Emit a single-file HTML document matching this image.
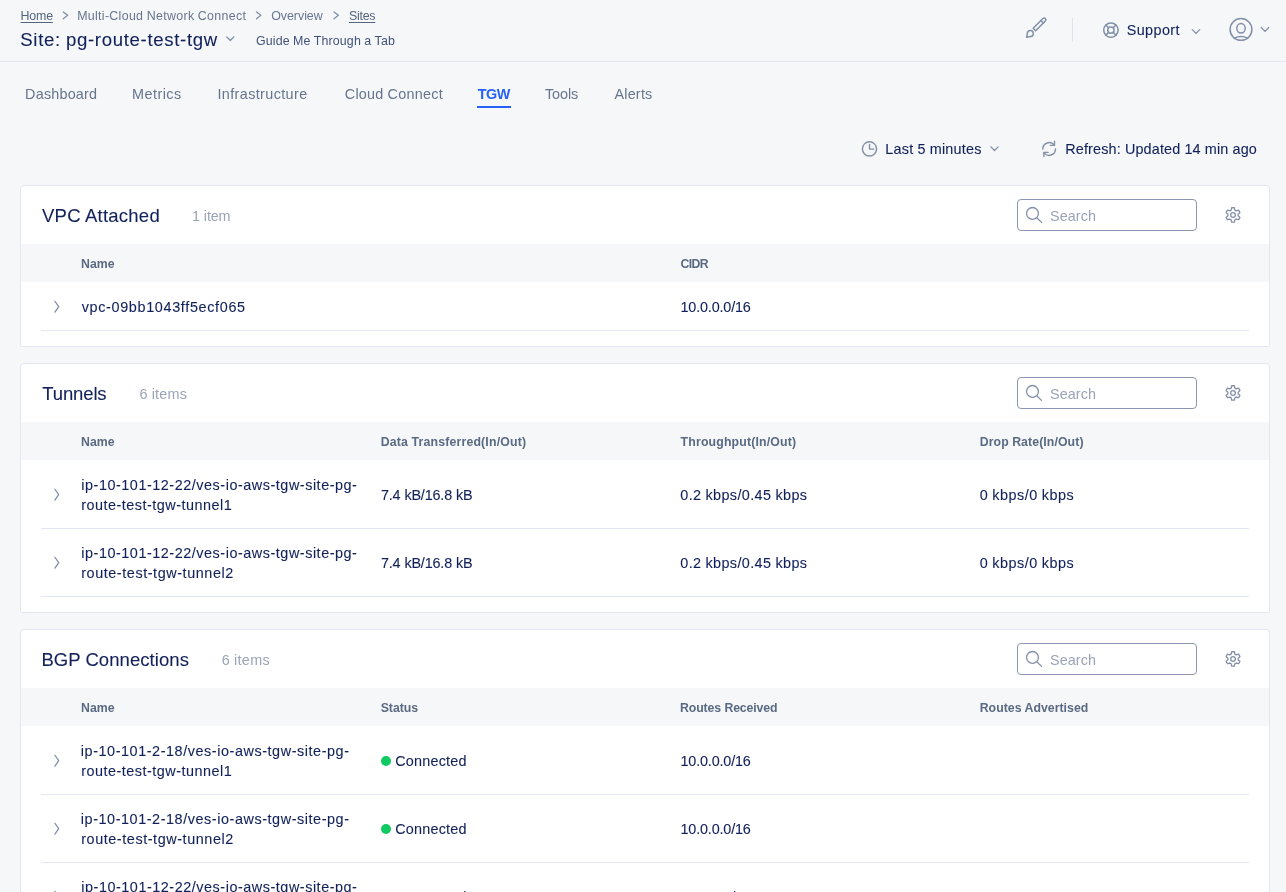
<!DOCTYPE html>
<html lang="en">
<head>
<meta charset="utf-8">
<title>Site: pg-route-test-tgw</title>
<style>
*{box-sizing:border-box;margin:0;padding:0}
html,body{font-variant-ligatures:none;width:1286px;height:892px;overflow:hidden;background:#f5f7f9;font-family:"Liberation Sans",sans-serif;color:#12215a}
.t{position:absolute;white-space:nowrap;line-height:1}
#L{position:absolute;left:0;top:0;width:1286px;height:892px;will-change:transform}
.abs{position:absolute}
h1,h2{font-weight:normal}
a{text-decoration:none}
.bc{font-size:12.4px;color:#67768f}
.bc.u{text-decoration:underline;text-underline-offset:2px;text-decoration-thickness:1px;color:#55657f}
.ttl{font-size:18.6px;color:#12215a;-webkit-text-stroke:0.1px #12215a}
.guide{font-size:12.4px;color:#44537a}
.tab{font-size:14.4px;color:#66758d}
.tab.on{color:#2761fb;font-weight:bold}
.ctl{font-size:14.4px;color:#12215a;-webkit-text-stroke:0.1px #12215a}
.card{position:absolute;left:20px;width:1250px;background:#fff;border:1px solid #e2e6f2;border-radius:4px 4px 1.5px 1.5px}
.band{position:absolute;left:21px;width:1248px;height:38px;background:#f5f7f9}
.ln{position:absolute;left:41px;width:1208px;height:1px;background:#e2e6f2}
.h2{font-size:18.5px;color:#12215a;-webkit-text-stroke:0.1px #12215a}
.cnt{font-size:14.4px;color:#9aa3b8}
.ph{font-size:14.4px;color:#9aa3b8}
.th{font-size:12.3px;font-weight:bold;color:#5b6a83}
.td{font-size:14.4px;color:#12215a;-webkit-text-stroke:0.1px #12215a}
.srch{position:absolute;left:1017px;width:180px;height:32px;border:1px solid #8d96b0;border-radius:4px;background:#fff}
.dot{position:absolute;width:10px;height:10px;border-radius:50%;background:#0fcb62}
svg{position:absolute;overflow:visible}
</style>
</head>
<body>

<div id="L">
<div class="abs" style="left:0;top:61px;width:1286px;height:1px;background:#e3e6f0"></div>
<div class="abs" style="left:477px;top:106px;width:34px;height:2px;background:#2761fb"></div>
<div class="abs" style="left:1072px;top:18px;width:1px;height:24px;background:#dfe3ec"></div>

<div class="card" style="top:185px;height:162px"></div>
<div class="band" style="top:244px"></div>
<div class="ln" style="top:330px"></div>
<div class="srch" style="top:199px"></div>

<div class="card" style="top:363px;height:250px"></div>
<div class="band" style="top:422px"></div>
<div class="ln" style="top:528px"></div>
<div class="ln" style="top:596px"></div>
<div class="srch" style="top:377px"></div>

<div class="card" style="top:629px;height:300px"></div>
<div class="band" style="top:688px"></div>
<div class="ln" style="top:794px"></div>
<div class="ln" style="top:862px"></div>
<div class="srch" style="top:643px"></div>
<div class="dot" style="left:381px;top:756px"></div>
<div class="dot" style="left:381px;top:824px"></div>
<div class="dot" style="left:381px;top:892px"></div>
<svg width="1286" height="892" viewBox="0 0 1286 892" style="left:0;top:0" fill="none" stroke="#8390a8" stroke-width="1.3" stroke-linecap="round" stroke-linejoin="round">
<path d="M63.30 11.90 L67.70 15.35 L63.30 18.80"/>
<path d="M256.50 11.90 L260.90 15.35 L256.50 18.80"/>
<path d="M334.00 11.90 L338.40 15.35 L334.00 18.80"/>
<path d="M226.70 36.90 L230.30 40.50 L233.90 36.90"/>
<g stroke-width="1.5"><g transform="translate(1034.38 29.52) rotate(-45)"><path d="M0 -1.72 H13.78 A1.72 1.72 0 0 1 13.78 1.72 H0 Z"/><path d="M11 -1.72 V1.72"/></g>
<path d="M1026.60 37.20 L1027.35 33.07 A3.00 3.00 0 1 1 1030.75 36.57 Z"/></g>
<g stroke-width="1.5"><circle cx="1110.9" cy="30.1" r="7.2"/><circle cx="1110.9" cy="30.1" r="3.2"/>
<path d="M1113.16 32.36 L1115.99 35.19"/>
<path d="M1108.64 32.36 L1105.81 35.19"/>
<path d="M1108.64 27.84 L1105.81 25.01"/>
<path d="M1113.16 27.84 L1115.99 25.01"/>
</g>
<path d="M1192.30 29.65 L1196.00 33.35 L1199.70 29.65"/>
<g stroke-width="1.5"><circle cx="1241" cy="29.45" r="10.9"/><ellipse cx="1241" cy="28.3" rx="4.2" ry="4.8"/><path d="M1234.4 38.1 Q1241 35.0 1247.6 38.1"/></g>
<path d="M1261.30 27.55 L1265.00 31.35 L1268.70 27.55"/>
<g stroke-width="1.4"><circle cx="869.5" cy="148.9" r="7.1"/><path d="M869.5 144.4 V149.1 H873.9"/></g>
<path d="M990.90 146.90 L994.50 150.50 L998.10 146.90"/>
<g stroke-width="1.4"><path d="M1042.8 149 A6.4 6.4 0 0 1 1054.3 145.2"/><path d="M1054.5 141.3 V145.4 H1050.3"/><path d="M1055.5 149 A6.4 6.4 0 0 1 1044 152.8"/><path d="M1043.9 156.6 V152.4 H1048.1"/></g>
<circle cx="1032.50" cy="213.40" r="5.9"/><path d="M1036.80 217.80 L1041.50 222.40"/>
<path d="M1231.17 210.12 L1231.69 207.74 L1234.37 207.74 L1234.89 210.12 L1236.30 210.93 L1238.62 210.20 L1239.96 212.52 L1238.17 214.16 L1238.17 215.78 L1239.96 217.42 L1238.62 219.74 L1236.30 219.01 L1234.89 219.82 L1234.37 222.20 L1231.69 222.20 L1231.17 219.82 L1229.76 219.01 L1227.44 219.74 L1226.10 217.42 L1227.89 215.78 L1227.89 214.16 L1226.10 212.52 L1227.44 210.20 L1229.76 210.93Z"/><circle cx="1233.03" cy="214.97" r="2.35"/>
<circle cx="1032.50" cy="391.40" r="5.9"/><path d="M1036.80 395.80 L1041.50 400.40"/>
<path d="M1231.17 388.12 L1231.69 385.74 L1234.37 385.74 L1234.89 388.12 L1236.30 388.93 L1238.62 388.20 L1239.96 390.52 L1238.17 392.16 L1238.17 393.78 L1239.96 395.42 L1238.62 397.74 L1236.30 397.01 L1234.89 397.82 L1234.37 400.20 L1231.69 400.20 L1231.17 397.82 L1229.76 397.01 L1227.44 397.74 L1226.10 395.42 L1227.89 393.78 L1227.89 392.16 L1226.10 390.52 L1227.44 388.20 L1229.76 388.93Z"/><circle cx="1233.03" cy="392.97" r="2.35"/>
<circle cx="1032.50" cy="657.40" r="5.9"/><path d="M1036.80 661.80 L1041.50 666.40"/>
<path d="M1231.17 654.12 L1231.69 651.74 L1234.37 651.74 L1234.89 654.12 L1236.30 654.93 L1238.62 654.20 L1239.96 656.52 L1238.17 658.16 L1238.17 659.78 L1239.96 661.42 L1238.62 663.74 L1236.30 663.01 L1234.89 663.82 L1234.37 666.20 L1231.69 666.20 L1231.17 663.82 L1229.76 663.01 L1227.44 663.74 L1226.10 661.42 L1227.89 659.78 L1227.89 658.16 L1226.10 656.52 L1227.44 654.20 L1229.76 654.93Z"/><circle cx="1233.03" cy="658.97" r="2.35"/>
<path d="M54.90 301.25 L58.70 306.70 L54.90 312.15"/>
<path d="M54.90 489.25 L58.70 494.70 L54.90 500.15"/>
<path d="M54.90 557.25 L58.70 562.70 L54.90 568.15"/>
<path d="M54.90 755.25 L58.70 760.70 L54.90 766.15"/>
<path d="M54.90 823.25 L58.70 828.70 L54.90 834.15"/>
<path d="M54.90 891.25 L58.70 896.70 L54.90 902.15"/>
</svg>

<header>
<a id="bc1" class="t bc u" style="left:20.56px;top:9.90px;letter-spacing:-0.189px">Home</a>
<a id="bc2" class="t bc" style="left:77.20px;top:9.90px;letter-spacing:0.314px;word-spacing:-0.314px">Multi-Cloud Network Connect</a>
<a id="bc3" class="t bc" style="left:271.21px;top:9.90px;letter-spacing:-0.023px">Overview</a>
<a id="bc4" class="t bc u" style="left:348.90px;top:9.90px;letter-spacing:-0.236px">Sites</a>
<h1 id="ttl" class="t ttl" style="left:20.29px;top:31.00px;letter-spacing:0.667px;word-spacing:-0.667px">Site: pg-route-test-tgw</h1>
<span id="gd" class="t guide" style="left:255.96px;top:34.72px;letter-spacing:0.133px;word-spacing:-0.133px">Guide Me Through a Tab</span>
<span id="sup" class="t ctl" style="left:1126.73px;top:23.22px;letter-spacing:0.396px">Support</span>
</header>
<nav>
<a id="tb1" class="t tab" style="left:25.11px;top:87.10px;letter-spacing:0.192px">Dashboard</a>
<a id="tb2" class="t tab" style="left:132.11px;top:87.10px;letter-spacing:0.439px">Metrics</a>
<a id="tb3" class="t tab" style="left:217.49px;top:87.10px;letter-spacing:0.378px">Infrastructure</a>
<a id="tb4" class="t tab" style="left:344.79px;top:87.10px;letter-spacing:0.248px;word-spacing:-0.248px">Cloud Connect</a>
<a id="tb5" class="t tab on" style="left:477.82px;top:87.10px;letter-spacing:-0.548px">TGW</a>
<a id="tb6" class="t tab" style="left:545.00px;top:87.10px;letter-spacing:-0.086px">Tools</a>
<a id="tb7" class="t tab" style="left:614.41px;top:87.10px;letter-spacing:0.222px">Alerts</a>
</nav>
<div>
<span id="c1" class="t ctl" style="left:885.17px;top:142.32px;letter-spacing:0.256px;word-spacing:-0.256px">Last 5 minutes</span>
<span id="c2" class="t ctl" style="left:1065.17px;top:142.32px;letter-spacing:0.167px;word-spacing:-0.167px">Refresh: Updated 14 min ago</span>
</div>
<section>
<h2 id="h1" class="t h2" style="left:42.02px;top:206.82px;letter-spacing:0.247px;word-spacing:-0.247px">VPC Attached</h2>
<span id="n1" class="t cnt" style="left:191.97px;top:208.90px;letter-spacing:-0.141px;word-spacing:0.141px">1 item</span>
<span id="s1" class="t ph" style="left:1049.98px;top:209.10px;letter-spacing:0.094px">Search</span>
<span id="a1" class="t th" style="left:81.00px;top:258.00px;letter-spacing:0.019px">Name</span>
<span id="a2" class="t th" style="left:680.45px;top:258.00px;letter-spacing:-0.611px">CIDR</span>
<span id="r1a" class="t td" style="left:81.65px;top:300.00px;letter-spacing:0.666px">vpc-09bb1043ff5ecf065</span>
<span id="r1b" class="t td" style="left:680.48px;top:300.00px;letter-spacing:-0.166px">10.0.0.0/16</span>
</section>
<section>
<h2 id="h2" class="t h2" style="left:42.32px;top:384.82px;letter-spacing:-0.139px">Tunnels</h2>
<span id="n2" class="t cnt" style="left:139.41px;top:386.90px;letter-spacing:0.243px;word-spacing:-0.243px">6 items</span>
<span id="s2" class="t ph" style="left:1049.98px;top:387.10px;letter-spacing:0.094px">Search</span>
<span id="b1" class="t th" style="left:81.00px;top:436.00px;letter-spacing:0.019px">Name</span>
<span id="b2" class="t th" style="left:380.67px;top:436.00px;letter-spacing:0.180px;word-spacing:-0.180px">Data Transferred(In/Out)</span>
<span id="b3" class="t th" style="left:680.60px;top:436.00px;letter-spacing:0.167px">Throughput(In/Out)</span>
<span id="b4" class="t th" style="left:979.69px;top:436.00px;letter-spacing:0.090px;word-spacing:-0.090px">Drop Rate(In/Out)</span>
<span id="t1a" class="t td" style="left:81.27px;top:478.32px;letter-spacing:0.540px">ip-10-101-12-22/ves-io-aws-tgw-site-pg-</span>
<span id="t1b" class="t td" style="left:81.20px;top:498.32px;letter-spacing:0.503px">route-test-tgw-tunnel1</span>
<span id="t1c" class="t td" style="left:380.90px;top:488.00px;letter-spacing:-0.172px;word-spacing:0.172px">7.4 kB/16.8 kB</span>
<span id="t1d" class="t td" style="left:680.32px;top:488.00px;letter-spacing:0.391px;word-spacing:-0.391px">0.2 kbps/0.45 kbps</span>
<span id="t1e" class="t td" style="left:979.82px;top:488.00px;letter-spacing:0.502px;word-spacing:-0.502px">0 kbps/0 kbps</span>
<span id="t2a" class="t td" style="left:81.27px;top:546.32px;letter-spacing:0.540px">ip-10-101-12-22/ves-io-aws-tgw-site-pg-</span>
<span id="t2b" class="t td" style="left:81.20px;top:566.32px;letter-spacing:0.576px">route-test-tgw-tunnel2</span>
<span id="t2c" class="t td" style="left:380.90px;top:556.00px;letter-spacing:-0.172px;word-spacing:0.172px">7.4 kB/16.8 kB</span>
<span id="t2d" class="t td" style="left:680.32px;top:556.00px;letter-spacing:0.391px;word-spacing:-0.391px">0.2 kbps/0.45 kbps</span>
<span id="t2e" class="t td" style="left:979.82px;top:556.00px;letter-spacing:0.502px;word-spacing:-0.502px">0 kbps/0 kbps</span>
</section>
<section>
<h2 id="h3" class="t h2" style="left:41.39px;top:650.82px;letter-spacing:0.066px;word-spacing:-0.066px">BGP Connections</h2>
<span id="n3" class="t cnt" style="left:221.83px;top:652.90px;letter-spacing:0.282px;word-spacing:-0.282px">6 items</span>
<span id="s3" class="t ph" style="left:1049.98px;top:653.10px;letter-spacing:0.094px">Search</span>
<span id="d1" class="t th" style="left:81.00px;top:702.00px;letter-spacing:0.019px">Name</span>
<span id="d2" class="t th" style="left:380.70px;top:702.00px;letter-spacing:-0.033px">Status</span>
<span id="d3" class="t th" style="left:680.00px;top:702.00px;letter-spacing:-0.118px;word-spacing:0.118px">Routes Received</span>
<span id="d4" class="t th" style="left:979.69px;top:702.00px;letter-spacing:0.029px;word-spacing:-0.029px">Routes Advertised</span>
<span id="g1a" class="t td" style="left:80.86px;top:744.32px;letter-spacing:0.567px">ip-10-101-2-18/ves-io-aws-tgw-site-pg-</span>
<span id="g1b" class="t td" style="left:81.20px;top:764.32px;letter-spacing:0.503px">route-test-tgw-tunnel1</span>
<span id="g1c" class="t td" style="left:395.16px;top:754.00px;letter-spacing:0.227px">Connected</span>
<span id="g1d" class="t td" style="left:680.48px;top:754.00px;letter-spacing:-0.166px">10.0.0.0/16</span>
<span id="g2a" class="t td" style="left:80.86px;top:812.32px;letter-spacing:0.567px">ip-10-101-2-18/ves-io-aws-tgw-site-pg-</span>
<span id="g2b" class="t td" style="left:81.20px;top:832.32px;letter-spacing:0.576px">route-test-tgw-tunnel2</span>
<span id="g2c" class="t td" style="left:395.16px;top:822.00px;letter-spacing:0.227px">Connected</span>
<span id="g2d" class="t td" style="left:680.48px;top:822.00px;letter-spacing:-0.166px">10.0.0.0/16</span>
<span id="g3a" class="t td" style="left:81.27px;top:880.32px;letter-spacing:0.540px">ip-10-101-12-22/ves-io-aws-tgw-site-pg-</span>
<span id="g3c" class="t td" style="left:395.16px;top:890.00px;letter-spacing:0.227px">Connected</span>
<span id="g3d" class="t td" style="left:680.48px;top:890.00px;letter-spacing:-0.166px">10.0.0.0/16</span>
</section>
</div>
</body>
</html>
